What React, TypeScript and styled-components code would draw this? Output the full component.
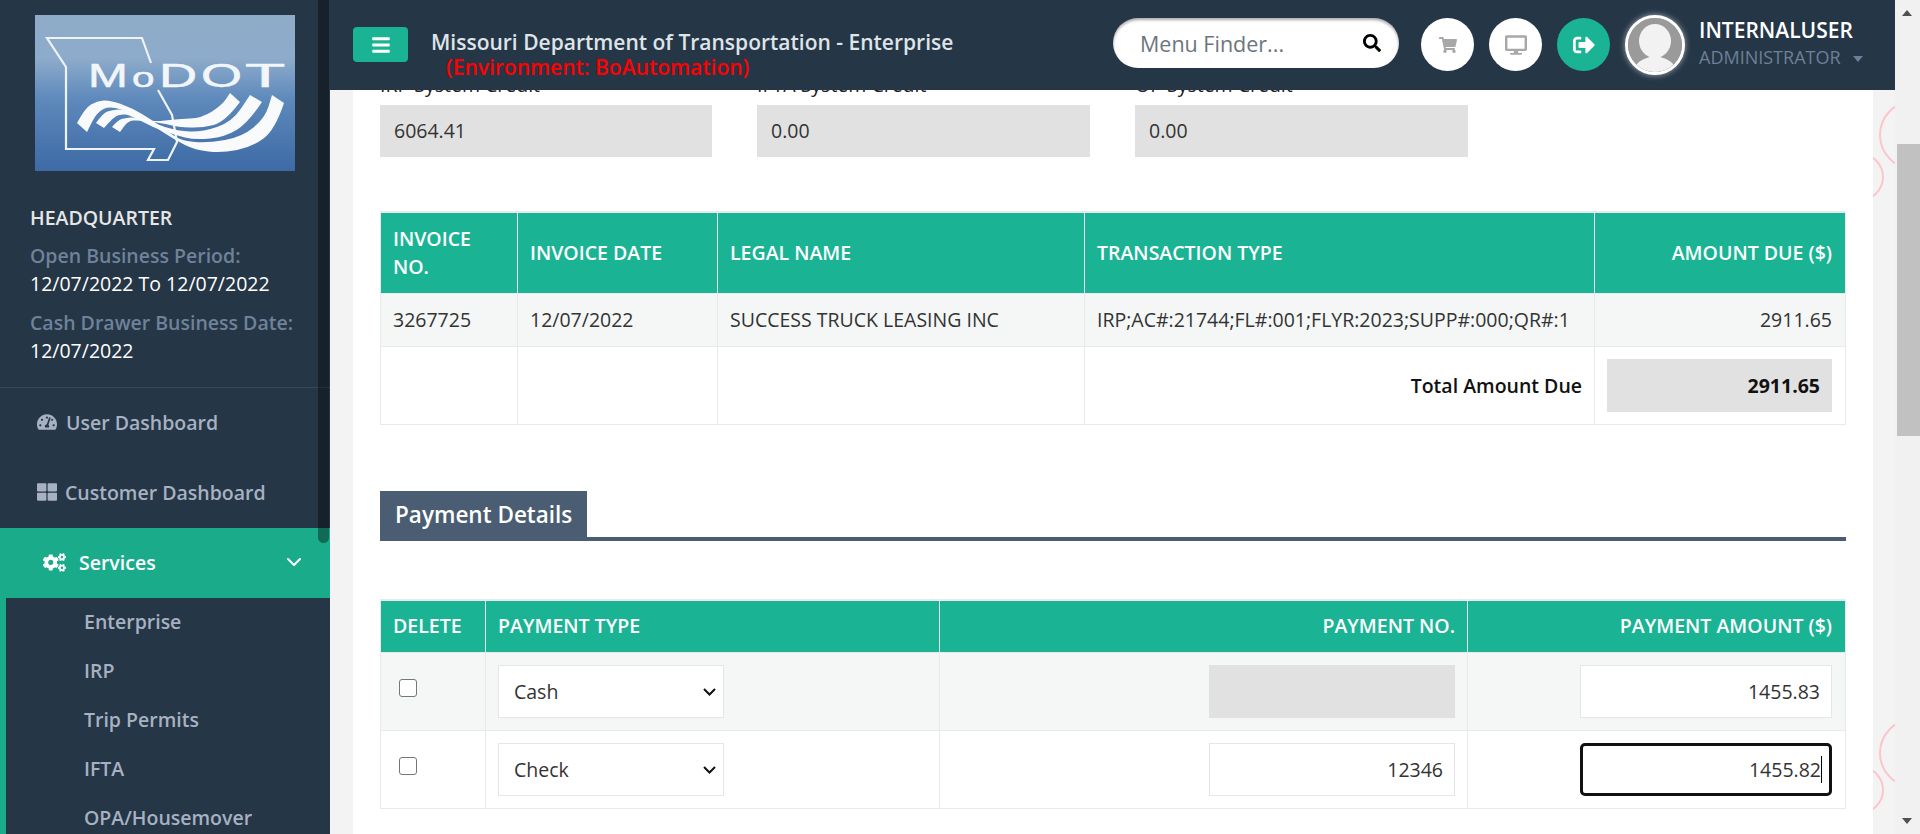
import styled, { createGlobalStyle } from 'styled-components';
import { ChevronDown } from 'lucide-react';
import {
  FaBars,
  FaCogs,
  FaDesktop,
  FaSearch,
  FaShoppingCart,
  FaSignOutAlt,
  FaTachometerAlt,
  FaThLarge,
} from 'react-icons/fa';

const GlobalStyle = createGlobalStyle`
  html, body {
    margin: 0;
    padding: 0;
    height: 834px;
    overflow: hidden;
    font-family: 'Open Sans', sans-serif;
    background: #f3f3f4;
  }
  * { box-sizing: border-box; }
`;

const Page = styled.div`
  display: flex;
  width: 1920px;
  height: 834px;
  overflow: hidden;
`;

const Sidebar = styled.aside`
  position: relative;
  flex: 0 0 330px;
  background: #253646;
  overflow: hidden;
`;

const SideThumb = styled.div`
  position: absolute;
  top: -6px;
  left: 318px;
  width: 11px;
  height: 549px;
  border-radius: 6px;
  background: rgba(0, 0, 0, 0.38);
`;

const LogoBox = styled.div`
  padding: 15px 0 0 35px;
  height: 200px;
`;

const SideInfo = styled.div`
  padding: 5px 0 23px 30px;
  border-bottom: 1px solid #3a4958;
  height: 188px;
`;

const Branch = styled.div`
  font-size: 19.5px;
  font-weight: 600;
  line-height: 26px;
  color: #e6e6e6;
  margin-bottom: 11px;
`;

const InfoLabel = styled.div`
  font-size: 19.5px;
  font-weight: 600;
  line-height: 28px;
  color: #6f8299;
  white-space: nowrap;
`;

const InfoValue = styled.div`
  font-size: 19.5px;
  line-height: 27px;
  color: #ffffff;
  margin-bottom: 12px;
  white-space: nowrap;
`;

const MainLink = styled.div`
  display: flex;
  align-items: center;
  gap: ${(p) => p.$gap ?? 9}px;
  height: 70px;
  padding: 0 0 2px 37px;
  font-size: 19.5px;
  font-weight: 600;
  color: #a7b1c2;
`;

const ActiveLink = styled.div`
  display: flex;
  align-items: center;
  height: 70px;
  padding: 0 24px 2px 43px;
  background: #1aab8b;
  color: #ffffff;
  font-size: 19.5px;
  font-weight: 600;
`;

const ActiveLabel = styled.span`
  flex: 1;
  margin-left: 13px;
`;

const SubMenu = styled.div`
  border-left: 6px solid #1aab8b;
  padding: 0 0 0 78px;
`;

const SubLink = styled.div`
  height: 49px;
  line-height: 48px;
  font-size: 19.5px;
  font-weight: 600;
  color: #a7b1c2;
`;

const Main = styled.div`
  flex: 1;
  min-width: 0;
  display: flex;
  flex-direction: column;
`;

const Header = styled.header`
  flex: 0 0 90px;
  display: flex;
  align-items: flex-start;
  background: #253646;
  position: relative;
  z-index: 2;
`;

const MenuButton = styled.div`
  display: flex;
  align-items: center;
  justify-content: center;
  width: 55px;
  height: 35px;
  margin: 27px 0 0 23px;
  border-radius: 4px;
  background: #1ab394;
  color: #ffffff;
  font-size: 20px;
`;

const TitleBlock = styled.div`
  width: 705px;
  padding: 27px 0 0 23px;
`;

const Title = styled.div`
  font-size: 21px;
  font-weight: 600;
  line-height: 30px;
  color: #dfe4e9;
  white-space: nowrap;
`;

const EnvLine = styled.div`
  padding-left: 15px;
  font-size: 21px;
  font-weight: 600;
  line-height: 21px;
  color: #ff0000;
  white-space: nowrap;
`;

const Search = styled.div`
  display: flex;
  align-items: center;
  width: 286px;
  height: 50px;
  margin-top: 18px;
  padding: 0 18px 0 27px;
  border-radius: 25px;
  background: #ffffff;
  box-shadow: inset 0 2px 3px rgba(0, 0, 0, 0.35);
  font-size: 21.5px;
  color: #6c757d;
`;

const SearchText = styled.span`
  flex: 1;
`;

const RoundButton = styled.div`
  display: flex;
  align-items: center;
  justify-content: center;
  width: 53px;
  height: 53px;
  margin: 18px 0 0 ${(p) => p.$left}px;
  border-radius: 50%;
  background: ${(p) => (p.$teal ? '#1ab394' : '#ffffff')};
  color: ${(p) => (p.$teal ? '#ffffff' : '#a8a8a8')};
  font-size: ${(p) => p.$size ?? 20}px;
`;

const Avatar = styled.div`
  width: 60px;
  height: 60px;
  margin: 15px 0 0 15px;
  border-radius: 50%;
  border: 3px solid #ffffff;
  box-shadow: 0 0 6px rgba(255, 255, 255, 0.6);
  overflow: hidden;
  background: #999999;
`;

const UserBlock = styled.div`
  margin: 15px 0 0 14px;
`;

const UserName = styled.div`
  font-size: 21px;
  font-weight: 600;
  line-height: 30px;
  color: #ffffff;
`;

const UserRole = styled.div`
  display: flex;
  align-items: center;
  gap: 12px;
  font-size: 18px;
  line-height: 24px;
  color: #6d8097;
`;

const RoleCaret = styled.span`
  width: 0;
  height: 0;
  margin-top: 4px;
  border-left: 5.5px solid transparent;
  border-right: 5.5px solid transparent;
  border-top: 6px solid #6d8097;
`;

const Scroller = styled.div`
  flex: 1;
  min-height: 0;
  overflow: hidden;
  padding: 0 22px 0 23px;
  background: #f3f3f4;
  position: relative;
`;

const Card = styled.div`
  display: flow-root;
  background: #ffffff;
  height: 744px;
  padding: 0 27px;
`;

const FieldRow = styled.div`
  display: grid;
  grid-template-columns: 332px 333px 333px;
  column-gap: 45px;
  margin-top: -17px;
`;

const FieldLabel = styled.div`
  height: 24px;
  margin-bottom: 8px;
  font-size: 19.5px;
  line-height: 24px;
  color: #222;
`;

const ReadOnlyBox = styled.div`
  height: 52px;
  padding: 0 14px;
  background: #e1e1e1;
  font-size: 19.5px;
  line-height: 52px;
  color: #333;
`;

const Table = styled.table`
  width: 1465px;
  table-layout: fixed;
  border-collapse: collapse;
  margin-top: ${(p) => p.$top}px;
  border-top: 2px solid #e7eaec;
`;

const Th = styled.th`
  height: ${(p) => p.$h}px;
  padding: 0 12px;
  background: #1ab394;
  border: 1px solid #e7eaec;
  border-top: 0;
  color: #ffffff;
  font-size: 19.5px;
  font-weight: 600;
  line-height: 28px;
  text-align: ${(p) => p.$align ?? 'left'};
  &:last-child {
    padding-right: 13px;
  }
`;

const Tr = styled.tr`
  background: ${(p) => (p.$striped ? '#f4f7f6' : '#ffffff')};
`;

const Td = styled.td`
  height: ${(p) => p.$h}px;
  padding: 0 12px;
  border: 1px solid #e7eaec;
  font-size: 19.5px;
  color: ${(p) => (p.$strong ? '#111' : '#333')};
  font-weight: ${(p) => (p.$strong ? 600 : 400)};
  text-align: ${(p) => p.$align ?? 'left'};
  white-space: nowrap;
  &:last-child {
    padding-right: 13px;
  }
`;

const TotalBox = styled.div`
  height: 53px;
  padding: 0 12px;
  background: #e1e1e1;
  font-weight: 700;
  line-height: 53px;
  color: #111;
  text-align: right;
`;

const SectionHead = styled.div`
  margin-top: 66px;
  border-bottom: 4px solid #4a5d72;
`;

const SectionTab = styled.div`
  display: inline-block;
  height: 46px;
  padding: 0 15px;
  background: #4a5d72;
  color: #ffffff;
  font-size: 22.5px;
  font-weight: 600;
  line-height: 47px;
  vertical-align: bottom;
`;

const Check = styled.span`
  display: block;
  width: 18px;
  height: 18px;
  margin: -8px 0 0 6px;
  border: 1.5px solid #767676;
  border-radius: 3px;
  background: #ffffff;
`;

const SelectWrap = styled.div`
  position: relative;
  width: 226px;
  height: 53px;
`;

const PayType = styled.select`
  display: block;
  width: 100%;
  height: 100%;
  padding: 0 24px 0 15px;
  border: 1px solid #e5e6e7;
  border-radius: 0;
  background: #ffffff;
  font-family: inherit;
  font-size: 19.5px;
  color: #333;
  appearance: none;
`;

const SelectArrow = styled.svg`
  position: absolute;
  top: 23px;
  right: 8px;
  pointer-events: none;
`;

const PayInput = styled.div`
  position: relative;
  width: ${(p) => p.$w}px;
  height: 53px;
  margin-left: auto;
  padding: 0 11px;
  border: 1px solid #e5e6e7;
  background: #ffffff;
  font-size: 19.5px;
  line-height: 51px;
  color: #333;
  text-align: right;
`;

const DisabledInput = styled(PayInput)`
  background: #e1e1e1;
  border: 0;
`;

const FocusedInput = styled(PayInput)`
  border: 3px solid #111;
  border-radius: 5px;
  padding: 0 8px;
  line-height: 47px;
`;

const Caret = styled.span`
  position: absolute;
  top: 10px;
  right: 7px;
  width: 1px;
  height: 27px;
  background: #000;
`;

const Track = styled.div`
  position: relative;
  flex: 0 0 25px;
  background: #f1f1f1;
`;

const Thumb = styled.div`
  position: absolute;
  top: 144px;
  left: 2px;
  right: 0;
  height: 292px;
  background: #c1c1c1;
`;

const ArrowUp = styled.span`
  position: absolute;
  top: 10px;
  left: 7px;
  border-left: 5.5px solid transparent;
  border-right: 5.5px solid transparent;
  border-bottom: 6px solid #505050;
`;

const ArrowDown = styled.span`
  position: absolute;
  bottom: 10px;
  left: 7px;
  border-left: 5.5px solid transparent;
  border-right: 5.5px solid transparent;
  border-top: 6px solid #505050;
`;

const RingClip = styled.div`
  position: absolute;
  top: 0;
  right: 0;
  bottom: 0;
  width: 22px;
  overflow: hidden;
`;

const Ring = styled.span`
  position: absolute;
  right: ${(p) => p.$right}px;
  top: ${(p) => p.$top}px;
  width: ${(p) => p.$d}px;
  height: ${(p) => p.$d}px;
  border: 2px solid #fcc5cc;
  border-radius: 50%;
`;

// the wordmark is stretched unevenly in the source logo, so one text per letter
const logoLetters = [
  { c: 'M', x: 53, sx: 1.45, size: 33 },
  { c: 'o', x: 97, sx: 1.5, size: 27 },
  { c: 'D', x: 124, sx: 1.6, size: 33 },
  { c: 'O', x: 166, sx: 1.6, size: 33 },
  { c: 'T', x: 210, sx: 2, size: 33 },
];

type Pt = [number, number];

// smooth open curve through the points, using midpoints as anchors
function curve(pts: Pt[]) {
  let d = `L${pts[0][0]} ${pts[0][1]}`;
  for (let i = 1; i < pts.length - 1; i += 1) {
    const mx = (pts[i][0] + pts[i + 1][0]) / 2;
    const my = (pts[i][1] + pts[i + 1][1]) / 2;
    d += `Q${pts[i][0]} ${pts[i][1]} ${mx} ${my}`;
  }
  const last = pts[pts.length - 1];
  return `${d}L${last[0]} ${last[1]}`;
}

function ribbon(upper: Pt[], lower: Pt[]) {
  return `M${upper[0][0]} ${upper[0][1]}${curve(upper)}${curve(lower)}Z`;
}

const swooshes = [
  ribbon(
    [[42, 108], [50, 93], [62, 86], [75, 85], [97, 93], [117, 105], [135, 118], [147, 126], [173, 128], [207, 122], [230, 103], [237, 80]],
    [[249, 88], [240, 115], [217, 132], [187, 138], [160, 135], [140, 125], [117, 110], [97, 98], [75, 91], [62, 97], [52, 117]],
  ),
  ribbon(
    [[61, 108], [68, 98], [77, 95], [90, 94], [117, 108], [143, 116], [167, 117], [197, 107], [215, 80]],
    [[227, 87], [213, 108], [190, 122], [160, 125], [140, 120], [117, 112], [95, 100], [85, 99], [78, 103], [69, 113]],
  ),
  ribbon(
    [[77, 112], [83, 105], [90, 103], [100, 102], [117, 107], [143, 104], [167, 103], [187, 90], [195, 78]],
    [[205, 87], [190, 107], [167, 113], [143, 112], [127, 108], [103, 105], [93, 106], [85, 117]],
  ),
];

function Logo() {
  return (
    <svg width='260' height='156' viewBox='0 0 260 156'>
      <defs>
        <linearGradient id='logoBg' x1='0' y1='0' x2='0' y2='1'>
          <stop offset='0' stopColor='#8fabc8' />
          <stop offset='0.28' stopColor='#8dabcb' />
          <stop offset='0.55' stopColor='#5c88bb' />
          <stop offset='1' stopColor='#3e6aa5' />
        </linearGradient>
      </defs>
      <rect width='260' height='156' fill='url(#logoBg)' />
      <path
        d='M116 48L107 23H12L31 52V134H119L113 145H133L142 127L137 100L123 75'
        fill='none'
        stroke='#eef3f8'
        strokeWidth='2.2'
      />
      {logoLetters.map((l) => (
        <text
          key={l.c}
          transform={`translate(${l.x} 72) scale(${l.sx} 1)`}
          fill='#f2f6fa'
          stroke='#f2f6fa'
          strokeWidth='0.5'
          fontFamily='Liberation Sans, sans-serif'
          fontSize={l.size}
        >
          {l.c}
        </text>
      ))}
      {swooshes.map((d) => (
        <path key={d} d={d} fill='#f8fafc' />
      ))}
    </svg>
  );
}

function AvatarArt() {
  return (
    <svg width='54' height='54' viewBox='0 0 54 54'>
      <rect width='54' height='54' fill='#9a9a9a' />
      <ellipse cx='27' cy='23' rx='16' ry='17' fill='#f2f2f2' />
      <path d='M5 54C7 44 15 41 22 39H32C39 41 47 44 49 54Z' fill='#f2f2f2' />
    </svg>
  );
}

function PaymentSelect({ value }: { value: string }) {
  return (
    <SelectWrap>
      <PayType defaultValue={value}>
        <option>Cash</option>
        <option>Check</option>
      </PayType>
      <SelectArrow width='13' height='8' viewBox='0 0 13 8'>
        <path d='M1 1L6.5 6.5L12 1' fill='none' stroke='#111' strokeWidth='2' />
      </SelectArrow>
    </SelectWrap>
  );
}

const invoiceCols = [137, 200, 367, 510, 251];
const paymentCols = [105, 454, 528, 378];

export default function App() {
  return (
    <Page>
      <GlobalStyle />
      <Sidebar>
        <LogoBox>
          <Logo />
        </LogoBox>
        <SideInfo>
          <Branch>HEADQUARTER</Branch>
          <InfoLabel>Open Business Period:</InfoLabel>
          <InfoValue>12/07/2022 To 12/07/2022</InfoValue>
          <InfoLabel>Cash Drawer Business Date:</InfoLabel>
          <InfoValue>12/07/2022</InfoValue>
        </SideInfo>
        <MainLink>
          <FaTachometerAlt size={20} />
          User Dashboard
        </MainLink>
        <MainLink $gap={8}>
          <FaThLarge size={20} />
          Customer Dashboard
        </MainLink>
        <ActiveLink>
          <FaCogs size={23} />
          <ActiveLabel>Services</ActiveLabel>
          <ChevronDown size={24} strokeWidth={2} />
        </ActiveLink>
        <SubMenu>
          <SubLink>Enterprise</SubLink>
          <SubLink>IRP</SubLink>
          <SubLink>Trip Permits</SubLink>
          <SubLink>IFTA</SubLink>
          <SubLink>OPA/Housemover</SubLink>
        </SubMenu>
        <SideThumb />
      </Sidebar>
      <Main>
        <Header>
          <MenuButton>
            <FaBars />
          </MenuButton>
          <TitleBlock>
            <Title>Missouri Department of Transportation - Enterprise</Title>
            <EnvLine>(Environment: BoAutomation)</EnvLine>
          </TitleBlock>
          <Search>
            <SearchText>Menu Finder...</SearchText>
            <FaSearch size={18} color='#000' />
          </Search>
          <RoundButton $left={22}>
            <FaShoppingCart size={18} />
          </RoundButton>
          <RoundButton $left={15} $size={22}>
            <FaDesktop />
          </RoundButton>
          <RoundButton $left={15} $teal>
            <FaSignOutAlt size={22} />
          </RoundButton>
          <Avatar>
            <AvatarArt />
          </Avatar>
          <UserBlock>
            <UserName>INTERNALUSER</UserName>
            <UserRole>
              ADMINISTRATOR
              <RoleCaret />
            </UserRole>
          </UserBlock>
        </Header>
        <Scroller>
          <Card>
            <FieldRow>
              <div>
                <FieldLabel>IRP System Credit</FieldLabel>
                <ReadOnlyBox>6064.41</ReadOnlyBox>
              </div>
              <div>
                <FieldLabel>IFTA System Credit</FieldLabel>
                <ReadOnlyBox>0.00</ReadOnlyBox>
              </div>
              <div>
                <FieldLabel>OP System Credit</FieldLabel>
                <ReadOnlyBox>0.00</ReadOnlyBox>
              </div>
            </FieldRow>
            <Table $top={54}>
              <colgroup>
                {invoiceCols.map((w) => (
                  <col key={w} width={w} />
                ))}
              </colgroup>
              <thead>
                <tr>
                  <Th $h={81}>INVOICE NO.</Th>
                  <Th>INVOICE DATE</Th>
                  <Th>LEGAL NAME</Th>
                  <Th>TRANSACTION TYPE</Th>
                  <Th $align='right'>AMOUNT DUE ($)</Th>
                </tr>
              </thead>
              <tbody>
                <Tr $striped>
                  <Td $h={53}>3267725</Td>
                  <Td>12/07/2022</Td>
                  <Td>SUCCESS TRUCK LEASING INC</Td>
                  <Td>IRP;AC#:21744;FL#:001;FLYR:2023;SUPP#:000;QR#:1</Td>
                  <Td $align='right'>2911.65</Td>
                </Tr>
                <Tr>
                  <Td $h={78} />
                  <Td />
                  <Td />
                  <Td $align='right' $strong>
                    Total Amount Due
                  </Td>
                  <Td>
                    <TotalBox>2911.65</TotalBox>
                  </Td>
                </Tr>
              </tbody>
            </Table>
            <SectionHead>
              <SectionTab>Payment Details</SectionTab>
            </SectionHead>
            <Table $top={58}>
              <colgroup>
                {paymentCols.map((w) => (
                  <col key={w} width={w} />
                ))}
              </colgroup>
              <thead>
                <tr>
                  <Th $h={53}>DELETE</Th>
                  <Th>PAYMENT TYPE</Th>
                  <Th $align='right'>PAYMENT NO.</Th>
                  <Th $align='right'>PAYMENT AMOUNT ($)</Th>
                </tr>
              </thead>
              <tbody>
                <Tr $striped>
                  <Td $h={78}>
                    <Check />
                  </Td>
                  <Td>
                    <PaymentSelect value='Cash' />
                  </Td>
                  <Td>
                    <DisabledInput $w={246} />
                  </Td>
                  <Td>
                    <PayInput $w={252}>1455.83</PayInput>
                  </Td>
                </Tr>
                <Tr>
                  <Td $h={78}>
                    <Check />
                  </Td>
                  <Td>
                    <PaymentSelect value='Check' />
                  </Td>
                  <Td>
                    <PayInput $w={246}>12346</PayInput>
                  </Td>
                  <Td>
                    <FocusedInput $w={252}>
                      1455.82
                      <Caret />
                    </FocusedInput>
                  </Td>
                </Tr>
              </tbody>
            </Table>
          </Card>
          <RingClip>
            <Ring $top={10} $right={-54} $d={70} />
            <Ring $top={63} $right={11} $d={48} />
            <Ring $top={628} $right={-54} $d={70} />
            <Ring $top={676} $right={11} $d={48} />
          </RingClip>
        </Scroller>
      </Main>
      <Track>
        <ArrowUp />
        <Thumb />
        <ArrowDown />
      </Track>
    </Page>
  );
}
